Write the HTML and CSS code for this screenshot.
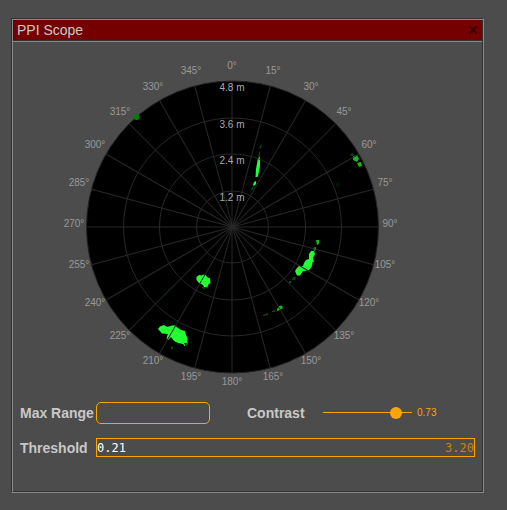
FILE: index.html
```html
<!DOCTYPE html>
<html lang="en">
<head>
<meta charset="utf-8">
<title>PPI Scope</title>
<link rel="stylesheet" href="styles.css">
</head>
<body>
<main class="panel">
  <header class="titlebar">
    <h1 class="title">PPI Scope</h1>
    <button class="close" type="button" aria-label="Close">
      <svg viewBox="0 0 10 10" width="10" height="10"><path d="M1.2 1.2L8.8 8.8M8.8 1.2L1.2 8.8"/></svg>
    </button>
  </header>

  <svg class="scope" viewBox="13 42 469 352" role="img" aria-label="Polar range plot">
    <defs>
      <filter id="soft" x="-30%" y="-30%" width="160%" height="160%"><feGaussianBlur stdDeviation="0.5"/></filter>
      <path id="spoke" d="M232.5 81V373"/>
    </defs>
    <circle class="dish" cx="232.5" cy="227" r="146"/>
    <g class="echo" filter="url(#soft)">
      <path d="M196.5 277L199 275L202 275.5L203 274.5L206 275L207 277L210 278.500L210.5 283L208 285L207.500 287.500L204 287L203 285L199 283L196.500 280Z"/>
      <path d="M158 329L160 326.5L164 325L167 327L172 325.500L175 325.500L178 328L181 330L185 331L186 335L187.500 338L187.500 344L185 346.500L183 344L178 343L174 341L171 337L168 340L166.500 338L168 334L162 333.500Z"/>
      <path d="M295 271L297 268L299 266L303 266L304 263L306 260L309 259L313 261L311.500 267L308.500 270.500L303 271L300 275.500L297 275.500Z"/>
      <path d="M309 254L311 251L314 251L315 254L313 258L314 262L309 262Z"/>
      <path d="M258 158L260 157L260 166L259 172L257.5 177L255.5 177L256 169Z"/>
      <path d="M254 182L256 181L256 184L254 186L253 185Z"/>
      <path d="M353 156L357 155L359 159L357 162L353 160Z" class="mid"/>
      <path d="M357 163L361 162L362 166L359 167Z" class="mid"/>
      <path d="M277 309L279 306L282 305.5L283 308L280 310L277 311Z" class="mid"/>
      <path d="M316 240L319 240L319 244L317 245ZM313 248L316 247L316 250L314 251Z" class="mid"/>
      <path d="M260 146L262 144L261 148L259 149ZM259 152L260 151L260 157L258 158ZM252 187L254 186L253 189L251 191ZM263 315L268 313L268 315L263 316ZM272 311L275 310L275 312L272 312ZM293 277L296 277L295 280L292 280ZM289 281L292 281L291 283L289 284ZM171 347L173 346L173 349L171 349ZM202 287L206 287L204 290ZM349 155L353 153L353 156Z" class="faint"/>
      <path d="M348 172L351 169L350 173ZM336 183L340 182L339 187L336 186ZM184 343L187 343L186 347ZM162 296L173 285L172 287L163 296Z" class="trace"/>
    </g>
    <circle class="edge-echo" cx="136.5" cy="117" r="3"/>
    <g class="grid">
      <circle cx="232.5" cy="227" r="36"/>
      <circle cx="232.5" cy="227" r="73"/>
      <circle cx="232.5" cy="227" r="109"/>
      <path d="M232 81V373M87 227H379"/>
      <use href="#spoke" transform="rotate(15 232.5 227)"/>
      <use href="#spoke" transform="rotate(30 232.5 227)"/>
      <use href="#spoke" transform="rotate(45 232.5 227)"/>
      <use href="#spoke" transform="rotate(60 232.5 227)"/>
      <use href="#spoke" transform="rotate(75 232.5 227)"/>
      <use href="#spoke" transform="rotate(105 232.5 227)"/>
      <use href="#spoke" transform="rotate(120 232.5 227)"/>
      <use href="#spoke" transform="rotate(135 232.5 227)"/>
      <use href="#spoke" transform="rotate(150 232.5 227)"/>
      <use href="#spoke" transform="rotate(165 232.5 227)"/>
    </g>
    <g class="ranges">
      <text x="232" y="91">4.8 m</text>
      <text x="232" y="128">3.6 m</text>
      <text x="232" y="164">2.4 m</text>
      <text x="232" y="201">1.2 m</text>
    </g>
    <g class="bearings">
      <text x="232" y="69">0°</text>
      <text x="273" y="74">15°</text>
      <text x="311" y="90">30°</text>
      <text x="344" y="115">45°</text>
      <text x="369" y="148">60°</text>
      <text x="385" y="186">75°</text>
      <text x="390" y="227">90°</text>
      <text x="385" y="268">105°</text>
      <text x="369" y="306">120°</text>
      <text x="344" y="339">135°</text>
      <text x="311" y="364">150°</text>
      <text x="273" y="380">165°</text>
      <text x="232" y="385">180°</text>
      <text x="191" y="380">195°</text>
      <text x="153" y="364">210°</text>
      <text x="120" y="339">225°</text>
      <text x="95" y="306">240°</text>
      <text x="79" y="268">255°</text>
      <text x="74" y="227">270°</text>
      <text x="79" y="186">285°</text>
      <text x="95" y="148">300°</text>
      <text x="120" y="115">315°</text>
      <text x="153" y="90">330°</text>
      <text x="191" y="74">345°</text>
    </g>
  </svg>

  <form class="controls">
    <div class="row">
      <label class="name" for="range">Max Range</label>
      <input class="range-box" id="range" type="text">
      <label class="name contrast-name" for="contrast">Contrast</label>
      <input class="slider" id="contrast" type="range" min="0" max="1" step="0.01" value="0.87">
      <output class="value" for="contrast">0.73</output>
    </div>
    <div class="row">
      <label class="name" for="threshold">Threshold</label>
      <div class="threshold">
        <input class="threshold-input" id="threshold" type="text" value="0.21">
        <output class="threshold-max" for="threshold">3.20</output>
      </div>
    </div>
  </form>
</main>
</body>
</html>
```
FILE: styles.css
```css
* {
  box-sizing: border-box;
}

body {
  margin: 0;
  padding: 18px 23px 17px 11px;
  background: #4c4c4c;
  color: #c8c8c8;
  font: 14px/20px "Liberation Sans", Arial, sans-serif;
}

.panel {
  border: 1px solid;
  border-color: #333 #888 #888 #333;
  box-shadow: inset 1px 1px #888, inset -1px -1px #333;
  padding: 1px 1px 33px;
}

.titlebar {
  display: flex;
  align-items: center;
  justify-content: space-between;
  margin-bottom: 1px;
  padding: 0 4px;
  background: #750000;
  border-bottom: 1px solid #333;
  box-shadow: 0 1px #888;
}

.title {
  margin: 0;
  font-size: 14px;
  font-weight: normal;
}

.close {
  display: flex;
  padding: 0;
  border: 0;
  background: none;
}

.close path {
  stroke: #3d0000;
  stroke-width: 2;
  fill: none;
}

.scope {
  display: block;
  width: 100%;
}

.dish {
  fill: #000;
  stroke: #222;
}

.grid {
  fill: none;
  stroke: #282828;
}

.echo {
  fill: #2f3;
}

.mid {
  fill: #14b81c;
}

.faint {
  fill: #06500b;
}

.trace {
  fill: #021404;
}

.edge-echo {
  fill: #008000;
}

.ranges,
.bearings {
  font-size: 10px;
  text-anchor: middle;
}

.ranges {
  fill: #aaa;
}

.bearings {
  fill: #999;
}

.controls {
  display: grid;
  grid-template-columns: minmax(0, 1fr);
  gap: 12px;
  padding: 7px 7px 0;
}

.row {
  display: flex;
  align-items: center;
  height: 23px;
}

.name {
  flex: 0 0 76px;
  font-weight: bold;
}

.range-box {
  width: 114px;
  height: 22px;
  border: 1px solid orange;
  border-radius: 5px;
  background: none;
  color: #fff;
}

.contrast-name {
  margin-left: 37px;
}

.slider {
  appearance: none;
  flex: 1;
  min-width: 0;
  height: 12px;
  margin: 0;
  background: linear-gradient(orange, orange) center / 100% 1px no-repeat;
}

.slider::-webkit-slider-thumb {
  appearance: none;
  width: 12px;
  height: 12px;
  border-radius: 50%;
  background: orange;
}

.value {
  width: 63px;
  padding-left: 5px;
  color: orange;
  font-size: 10px;
}

.threshold {
  display: flex;
  flex: 1;
  align-items: center;
  min-width: 0;
  height: 19px;
  padding-top: 1px;
  border: 1px solid orange;
  font: 12px/16px "DejaVu Sans Mono", monospace;
}

.threshold-input {
  flex: 1;
  min-width: 0;
  padding: 0;
  border: 0;
  background: none;
  color: #fff;
  font: inherit;
}

.threshold-max {
  color: #ca840d;
}
```
